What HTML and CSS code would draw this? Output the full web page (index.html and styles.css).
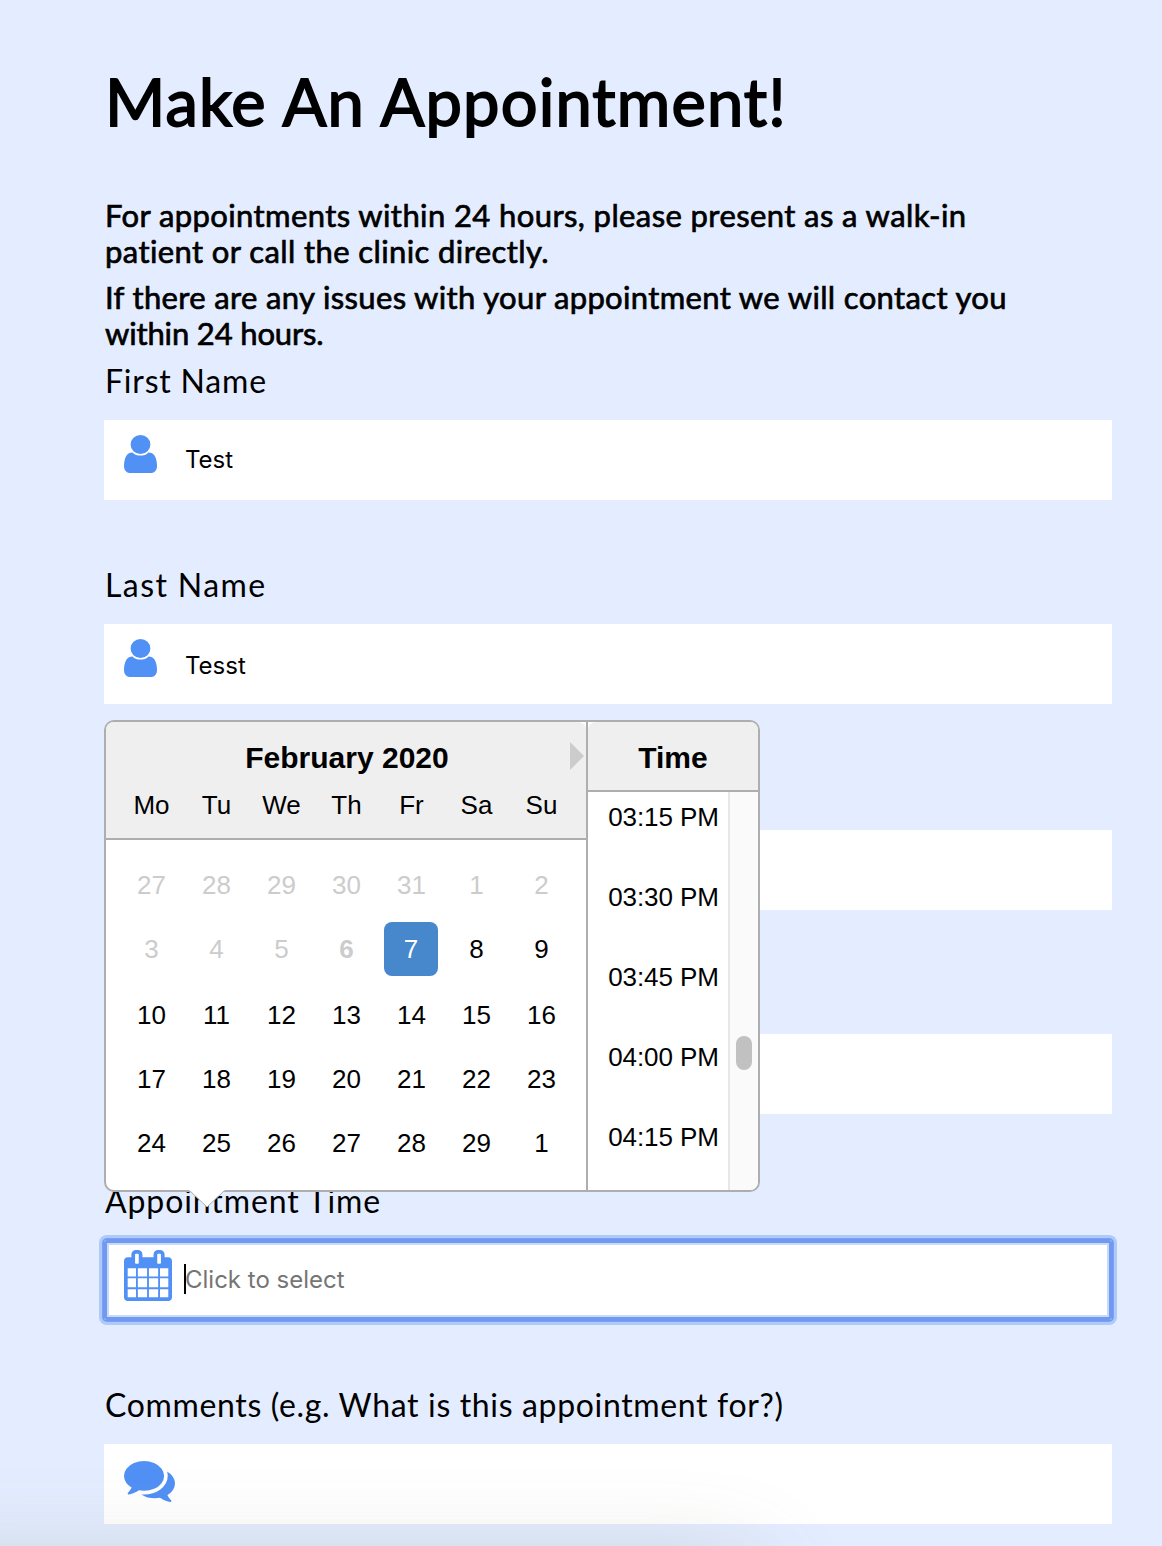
FILE: index.html
```html
<!DOCTYPE html>
<html lang="en">
<head>
<meta charset="utf-8">
<title>Make An Appointment</title>
<link rel="stylesheet" href="styles.css">
</head>
<body>
<main class="page">
  <h1 class="title">Make An Appointment!</h1>
  <div class="notes">
    <p class="note"><span class="n1">For appointments within 24 hours, please present as a walk-in</span><br><span class="n2">patient or call the clinic directly.</span></p>
    <p class="note"><span class="n3">If there are any issues with your appointment we will contact you</span><br><span class="n4">within 24 hours.</span></p>
  </div>
  <form class="form">
    <div class="field">
      <label class="label l1" for="first">First Name</label>
      <div class="control">
        <svg class="icon user" viewBox="0 0 1280 1536" preserveAspectRatio="none"><path transform="translate(0 1408) scale(1 -1)" d="M1280 137q0 -109 -62.5 -187t-150.5 -78h-854q-88 0 -150.5 78t-62.5 187q0 85 8.5 160.5t31.5 152t58.5 131t94 89t134.5 34.5q131 -128 313 -128t313 128q76 0 134.5 -34.5t94 -89t58.5 -131t31.5 -152t8.5 -160.5zM1024 1024q0 -159 -112.5 -271.5t-271.5 -112.5t-271.5 112.5t-112.5 271.5t112.5 271.5t271.5 112.5t271.5 -112.5t112.5 -271.5z"/></svg>
        <input class="input" id="first" type="text" value="Test">
      </div>
    </div>
    <div class="field">
      <label class="label l2" for="last">Last Name</label>
      <div class="control">
        <svg class="icon user" viewBox="0 0 1280 1536" preserveAspectRatio="none"><path transform="translate(0 1408) scale(1 -1)" d="M1280 137q0 -109 -62.5 -187t-150.5 -78h-854q-88 0 -150.5 78t-62.5 187q0 85 8.5 160.5t31.5 152t58.5 131t94 89t134.5 34.5q131 -128 313 -128t313 128q76 0 134.5 -34.5t94 -89t58.5 -131t31.5 -152t8.5 -160.5zM1024 1024q0 -159 -112.5 -271.5t-271.5 -112.5t-271.5 112.5t-112.5 271.5t112.5 271.5t271.5 112.5t271.5 -112.5t112.5 -271.5z"/></svg>
        <input class="input low" id="last" type="text" value="Tesst">
      </div>
    </div>
    <div class="field"><div class="label"></div><div class="control"></div></div>
    <div class="field"><div class="label"></div><div class="control"></div></div>
    <div class="field">
      <label class="label l3" for="time">Appointment Time</label>
      <div class="control focused">
        <svg class="icon calendar-icon" viewBox="0 0 1664 1792" preserveAspectRatio="none"><path transform="translate(0 1536) scale(1 -1)" d="M128 -128h288v288h-288v-288zM480 -128h320v288h-320v-288zM128 224h288v320h-288v-320zM480 224h320v320h-320v-320zM128 608h288v288h-288v-288zM864 -128h320v288h-320v-288zM480 608h320v288h-320v-288zM1248 -128h288v288h-288v-288zM864 224h320v320h-320v-320zM512 1088v288q0 13 -9.5 22.5t-22.5 9.5h-64q-13 0 -22.5 -9.5t-9.5 -22.5v-288q0 -13 9.5 -22.5t22.5 -9.5h64q13 0 22.5 9.5t9.5 22.5zM1248 224h288v320h-288v-320zM864 608h320v288h-320v-288zM1248 608h288v288h-288v-288zM1280 1088v288q0 13 -9.5 22.5t-22.5 9.5h-64q-13 0 -22.5 -9.5t-9.5 -22.5v-288q0 -13 9.5 -22.5t22.5 -9.5h64q13 0 22.5 9.5t9.5 22.5zM1664 1152v-1280q0 -52 -38 -90t-90 -38h-1408q-52 0 -90 38t-38 90v1280q0 52 38 90t90 38h128v96q0 66 47 113t113 47h64q66 0 113 -47t47 -113v-96h384v96q0 66 47 113t113 47h64q66 0 113 -47t47 -113v-96h128q52 0 90 -38t38 -90z"/></svg>
        <input class="input" id="time" type="text" placeholder="Click to select">
        <span class="caret"></span>
      </div>
    </div>
    <div class="field">
      <label class="label l4" for="comments">Comments (e.g. What is this appointment for?)</label>
      <div class="control">
        <svg class="icon comments-icon" viewBox="0 0 1792 1408" preserveAspectRatio="none"><path transform="translate(0 1280) scale(1 -1)" d="M1408 768q0 -139 -94 -257t-256.5 -186.5t-353.5 -68.5q-86 0 -176 16q-124 -88 -278 -128q-36 -9 -86 -16h-3q-11 0 -20.5 8t-11.5 21q-1 3 -1 6.5t0.5 6.5t2 6l2.5 5t3.5 5.5t4 5t4.5 5t4 4.5q5 6 23 25t26 29.5t22.5 29t25 38.5t20.5 44q-124 72 -195 177t-71 224q0 139 94 257t256.5 186.5t353.5 68.5t353.5 -68.5t256.5 -186.5t94 -257zM1792 512q0 -120 -71 -224.5t-195 -176.5q10 -24 20.5 -44t25 -38.5t22.5 -29t26 -29.5t23 -25q1 -1 4 -4.5t4.5 -5t4 -5t3.5 -5.5l2.5 -5t2 -6t0.5 -6.5t-1 -6.5q-3 -14 -13 -22t-22 -7q-50 7 -86 16q-154 40 -278 128q-90 -16 -176 -16q-271 0 -472 132q58 -4 88 -4q161 0 309 45t264 129q125 92 192 212t67 254q0 77 -23 152q129 -71 204 -178t75 -230z"/></svg>
        <input class="input" id="comments" type="text">
      </div>
    </div>
  </form>

  <div class="picker">
    <section class="month">
      <header class="month-head">
        <div class="month-name">February 2020</div>
        <span class="next"></span>
        <div class="week names"><span>Mo</span><span>Tu</span><span>We</span><span>Th</span><span>Fr</span><span>Sa</span><span>Su</span></div>
      </header>
      <div class="week days">
        <span class="off">27</span><span class="off">28</span><span class="off">29</span><span class="off">30</span><span class="off">31</span><span class="off">1</span><span class="off">2</span>
        <span class="off">3</span><span class="off">4</span><span class="off">5</span><span class="off today">6</span><span class="selected">7</span><span>8</span><span>9</span>
        <span>10</span><span>11</span><span>12</span><span>13</span><span>14</span><span>15</span><span>16</span>
        <span>17</span><span>18</span><span>19</span><span>20</span><span>21</span><span>22</span><span>23</span>
        <span>24</span><span>25</span><span>26</span><span>27</span><span>28</span><span>29</span><span>1</span>
      </div>
    </section>
    <section class="times">
      <header class="times-head">Time</header>
      <div class="times-body">
        <div class="slots"><span>03:15 PM</span><span>03:30 PM</span><span>03:45 PM</span><span>04:00 PM</span><span>04:15 PM</span></div>
        <div class="track"><span class="thumb"></span></div>
      </div>
    </section>
    <svg class="pointer" viewBox="0 0 36 18"><path d="M0 0H36L18 17Z" fill="#fff"/><path d="M1 1L18 17L35 1" fill="none" stroke="#aeaeae" stroke-width="1"/></svg>
  </div>
  <div class="shade"></div>
</main>
</body>
</html>
```
FILE: styles.css
```css
* { box-sizing: border-box; }
body { margin: 0; background: #e4edff; color: #000; font-family: Lato, sans-serif; }
.page { position: relative; width: 1162px; height: 1546px; overflow: hidden; padding: 61px 50px 0 104px; }
.title { margin: 0; height: 136px; padding-left: 1px; font-size: 65px; line-height: 80px; font-weight: 400; letter-spacing: 1.15px; white-space: nowrap; -webkit-text-stroke: 1.8px #000; }
.notes { height: 165px; padding-left: 1px; }
.note { margin: 0 0 10px; font-size: 31px; line-height: 36px; white-space: nowrap; -webkit-text-stroke: 0.7px #000; }
.n1, .n2 { letter-spacing: 0.4px; }
.n3 { letter-spacing: 0.35px; }
.n4 { letter-spacing: -0.15px; }
.form { display: grid; grid-template-rows: 204px 206px 204px 206px 204px 160px; }
.field { display: flex; flex-direction: column; }
.label { height: 58px; padding-left: 1px; line-height: 38px; font-size: 32px; white-space: nowrap; }
.l1 { letter-spacing: 0.8px; }
.l2 { letter-spacing: 1.4px; }
.l3 { letter-spacing: 0.9px; }
.l4 { letter-spacing: 0.65px; }
.control { position: relative; display: flex; align-items: center; height: 80px; background: #fff; padding-left: 20px; }
.icon { fill: #5190f5; position: absolute; left: 20px; }
.user { top: 15px; width: 33px; height: 38px; }
.calendar-icon { top: 10px; width: 48px; height: 51px; }
.comments-icon { top: 17px; width: 51px; height: 41px; }
.input { flex: 1; height: 80px; margin-left: 61px; padding: 0 0 2px; border: 0; outline: 0; background: transparent; font: 24px Inter, sans-serif; color: #000; }
.low { padding: 3px 0 0; }
.input::placeholder { color: #757575; opacity: 1; }
.focused { box-shadow: inset 0 0 0 3px #7099f2, inset 0 0 0 5px #c9d9f9, 0 0 0 1px #7099f2, 0 0 0 2px #7ba1f2, 0 0 0 5px #b1c9f8; border-radius: 3px; }
.caret { position: absolute; left: 80px; top: 24px; width: 2px; height: 30px; background: #000; }

.picker { position: absolute; left: 104px; top: 720px; width: 656px; height: 472px; display: flex; background: #fff; border: 2px solid #aeaeae; border-radius: 10px; font: 26px "Liberation Sans", Arial, sans-serif; }
.month { width: 482px; border-right: 2px solid #aeaeae; }
.month-head { position: relative; height: 118px; background: #efefef; border-bottom: 2px solid #aeaeae; border-radius: 8px 8px 0 0; }
.month-name { height: 63px; line-height: 71px; text-align: center; font-size: 30px; font-weight: 700; padding-left: 2px; }
.next { position: absolute; right: 2px; top: 20px; border: solid transparent; border-width: 14px 0 14px 14px; border-left-color: #ccc; }
.week { display: grid; grid-template-columns: repeat(7, 65px); padding-left: 13px; text-align: center; }
.names { line-height: 40px; }
.days { grid-template-rows: 64px 66px 64px 64px 64px; padding-top: 13px; line-height: 65px; }
.off { color: #ccc; }
.today { font-weight: 700; }
.selected { width: 54px; height: 54px; margin: 5px 0 0 5px; line-height: 55px; border-radius: 8px; background: #4787cb; color: #fff; }
.times { flex: 1; display: flex; flex-direction: column; }
.times-head { height: 70px; line-height: 71px; text-align: center; font-size: 30px; font-weight: 700; background: #efefef; border-bottom: 2px solid #aeaeae; border-radius: 8px 8px 0 0; }
.times-body { flex: 1; display: flex; }
.slots { width: 140px; display: grid; grid-auto-rows: 80px; height: 398px; margin-top: -15px; line-height: 80px; padding-left: 11px; text-align: center; letter-spacing: -0.1px; }
.track { flex: 1; height: 398px; background: #fafafa; border-left: 2px solid #e7e7e7; border-radius: 0 0 8px 0; padding: 244px 0 0 6px; }
.thumb { display: block; width: 16px; height: 34px; border-radius: 8px; background: #c1c1c1; }
.pointer { position: absolute; left: 83px; top: 468px; width: 36px; height: 18px; }
.shade { position: absolute; left: -100px; top: 1574px; width: 850px; height: 100px; box-shadow: 0 0 100px rgba(100, 105, 85, 0.3); }
```
